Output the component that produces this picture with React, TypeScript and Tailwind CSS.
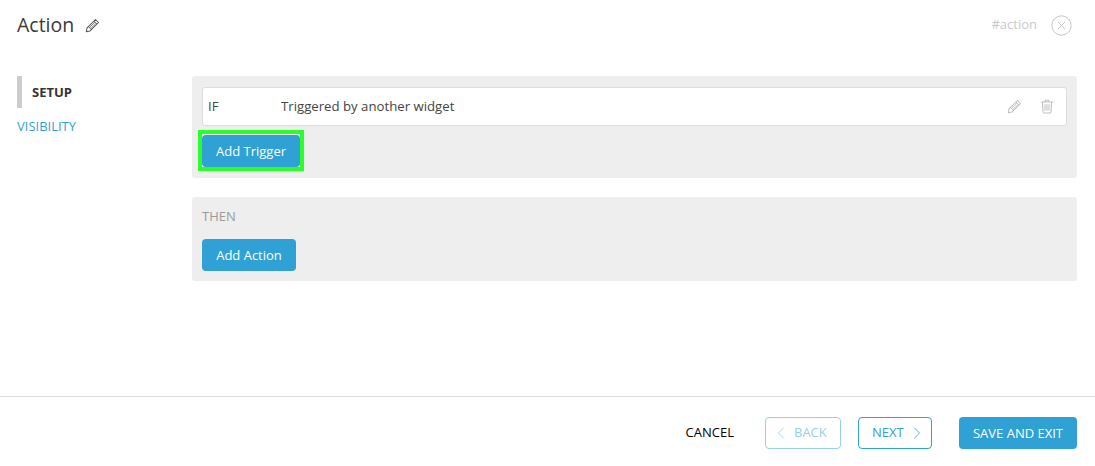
import { ChevronLeft, ChevronRight } from "lucide-react"

function PencilIcon({ size, className }: { size: number; className: string }) {
  return (
    <svg width={size} height={size} viewBox="0 0 16 16" fill="none" stroke="currentColor" strokeWidth="1.1" className={className}>
      <path d="M11.2 1.6 14.4 4.8 5.4 13.8 1.4 14.6 2.2 10.6Z" strokeLinejoin="round" />
      <path d="M9.6 3.2 12.8 6.4M3.6 9.2 6.8 12.4M4.4 10.6 10.8 4.2M5.6 11.8 12 5.4" strokeWidth="0.8" />
    </svg>
  )
}

function TrashIcon() {
  return (
    <svg width="14" height="15" viewBox="0 0 14 15" fill="none" stroke="currentColor" strokeWidth="1" className="text-[#bdbdbd]">
      <path d="M1 3h12M5 3V1.2h4V3M2.4 3l.6 10.2c0 .5.4.8.8.8h6.4c.4 0 .8-.3.8-.8L11.6 3" />
      <path d="M5 5.2v6.6M7 5.2v6.6M9 5.2v6.6" />
    </svg>
  )
}

function CloseIcon() {
  return (
    <svg width="21" height="21" viewBox="0 0 21 21" fill="none" stroke="currentColor" className="text-[#c4c4c4]">
      <circle cx="10.5" cy="10.5" r="9.7" />
      <path d="M7 7l7 7M14 7l-7 7" />
    </svg>
  )
}

const blueButton = "h-8 pt-px rounded-[4px] bg-[#30a1d4] text-white text-[13px] flex items-center justify-center"

export default function App() {
  return (
    <div className="w-[1095px] h-[466px] bg-white flex flex-col overflow-hidden font-['Open_Sans',sans-serif]">
      <header className="h-[50px] pl-[17px] pr-[23px] flex items-center justify-between">
        <div className="flex items-center gap-[11px]">
          <h1 className="text-[19.5px] text-[#3a3a3a]">Action</h1>
          <PencilIcon size={15} className="text-[#555]" />
        </div>
        <div className="flex items-center gap-[14px]">
          <span className="text-[13px] text-[#c9c9c9]">#action</span>
          <CloseIcon />
        </div>
      </header>

      <main className="flex-1 flex pt-[26px] pl-[17px] pr-[18px]">
        <nav className="w-[175px] shrink-0">
          <div className="h-8 pt-px border-l-[5px] border-[#cccccc] pl-[10px] flex items-center text-[13px] font-bold text-[#333]">
            SETUP
          </div>
          <div className="mt-2 h-5 pt-px flex items-center text-[13px] text-[#30a1d4]">VISIBILITY</div>
        </nav>

        <div className="flex-1 flex flex-col gap-[19px]">
          <section className="h-[102px] rounded-[3px] bg-[#eeeeee] pt-[11px] px-[10px]">
            <div className="h-[39px] rounded-[3px] border border-[#dddddd] bg-white pl-[5px] pr-[12px] flex items-center text-[13.2px] text-[#444]">
              <span className="w-[73px] pt-px">IF</span>
              <span className="flex-1 pt-px">Triggered by another widget</span>
              <PencilIcon size={15} className="text-[#bdbdbd] mr-[18px]" />
              <TrashIcon />
            </div>
            <div className="mt-1 -ml-1 w-[106px] border-4 border-[#2bff2b] pt-px">
              <button className={`${blueButton} w-[98px]`}>Add Trigger</button>
            </div>
          </section>

          <section className="h-[84px] rounded-[3px] bg-[#eeeeee] pt-[10px] px-[10px]">
            <div className="h-[19px] flex items-center text-[13px] text-[#9b9b9b]">THEN</div>
            <button className={`${blueButton} w-[94px] mt-[13px]`}>Add Action</button>
          </section>
        </div>
      </main>

      <footer className="h-[70px] border-t border-[#dddddd] pt-5 pr-[18px] flex items-start justify-end">
        <button className="h-8 text-[13px] text-black mr-[31px]">CANCEL</button>
        <button className="h-8 w-[76px] rounded-[4px] border border-[#97d0e9] text-[#97d0e9] text-[13px] flex items-center gap-[3px] pl-[5px] mr-[17px]">
          <ChevronLeft size={20} strokeWidth={1} />
          BACK
        </button>
        <button className="h-8 w-[74px] rounded-[4px] border border-[#30a1d4] text-[#30a1d4] text-[13px] flex items-center gap-[3px] pl-[13px] mr-[27px]">
          NEXT
          <ChevronRight size={20} strokeWidth={1} />
        </button>
        <button className={`${blueButton} w-[118px]`}>SAVE AND EXIT</button>
      </footer>
    </div>
  )
}
